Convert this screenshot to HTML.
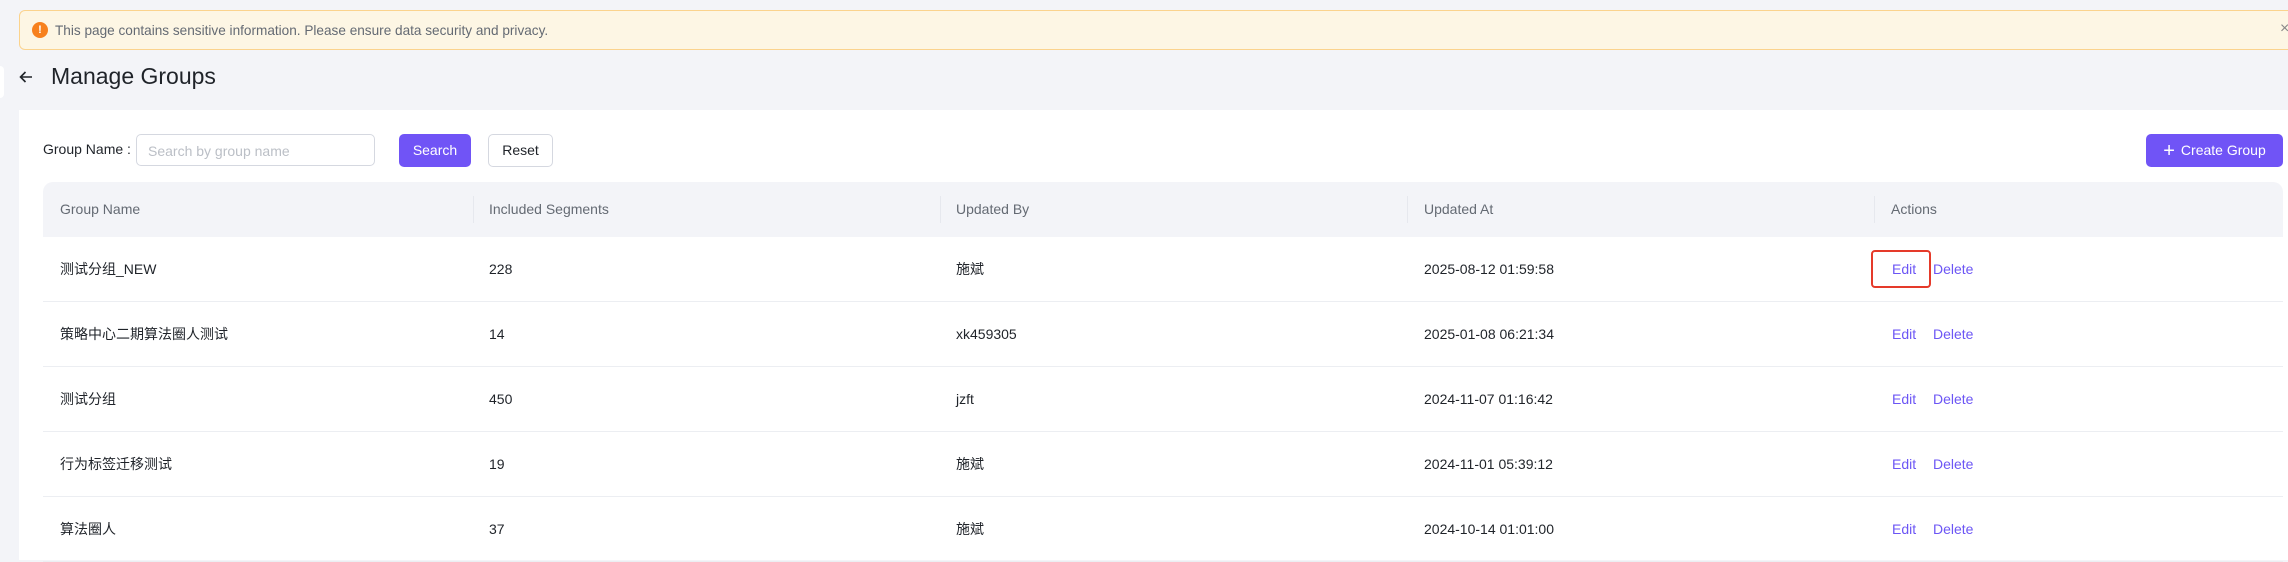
<!DOCTYPE html>
<html><head><meta charset="utf-8"><style>
*{box-sizing:border-box;margin:0;padding:0}
body{width:2288px;height:552px;background:#f3f4f8;font-family:"Liberation Sans","Noto Sans CJK SC",sans-serif;position:relative;overflow:hidden;color:#1f2329}
.abs{position:absolute}
.banner{left:19px;top:10px;width:2290px;height:40px;background:#fdf6e4;border:1px solid #fbd38d;border-radius:6px}
.banner .ic{left:12px;top:11px;width:16px;height:16px;border-radius:50%;background:#f7811e;color:#fff;font-size:11px;font-weight:bold;text-align:center;line-height:16px}
.banner .t{left:35px;top:12px;font-size:13.6px;color:#646a73}
.card{left:19px;top:110px;width:2280px;height:450px;background:#fff}
.row{position:absolute;left:43px;width:2240px;height:65px;border-bottom:1px solid #eceef2;font-size:14px}
.row span{position:absolute;top:23px;line-height:18px}
.hdr{position:absolute;left:43px;top:182px;width:2240px;height:55px;background:#f3f4f8;border-radius:10px 10px 0 0;font-size:14px;color:#646a73}
.hdr span{position:absolute;top:19px}
.hdr i{position:absolute;top:14px;width:1px;height:27px;background:#e6e8ee}
.lnk{color:#6c56f5}
.btn{position:absolute;height:33px;border-radius:5px;font-size:14px;text-align:center;line-height:31px}
</style></head><body>
<div class="abs" style="left:0;top:66px;width:4px;height:32px;background:#fff;border-radius:0 4px 4px 0"></div>
<div class="abs banner"><div class="abs ic">!</div><div class="abs t">This page contains sensitive information. Please ensure data security and privacy.</div></div>
<div class="abs" style="left:2280px;top:20px;font-size:16px;color:#888">×</div>
<svg class="abs" style="left:18px;top:69px" width="16" height="16" viewBox="0 0 16 16"><path d="M14 8H2.5M7.5 3L2.5 8l5 5" fill="none" stroke="#1f2329" stroke-width="1.6"/></svg>
<div class="abs" style="left:51px;top:63px;font-size:23px;font-weight:500;color:#1f2329">Manage Groups</div>
<div class="abs card"></div>
<div class="abs" style="left:43px;top:141px;font-size:14px">Group Name :</div>
<div class="abs" style="left:136px;top:134px;width:239px;height:32px;border:1px solid #d5d8e0;border-radius:5px;font-size:14px;color:#bbbfc6;padding:8px 11px">Search by group name</div>
<div class="btn" style="left:399px;top:134px;width:72px;background:#7054f6;color:#fff;border:1px solid #7054f6">Search</div>
<div class="btn" style="left:488px;top:134px;width:65px;background:#fff;border:1px solid #d5d8e0">Reset</div>
<div class="btn" style="left:2146px;top:134px;width:137px;background:#7054f6;color:#fff;border:1px solid #7054f6"><span style="font-size:20px;vertical-align:-2px;margin-right:6px">+</span>Create Group</div>
<div class="hdr"><span style="left:17px">Group Name</span><i style="left:430px"></i><span style="left:446px">Included Segments</span><i style="left:897px"></i><span style="left:913px">Updated By</span><i style="left:1364px"></i><span style="left:1381px">Updated At</span><i style="left:1831px"></i><span style="left:1848px">Actions</span></div>
<div class="row" style="top:237px"><span style="left:17px">测试分组_NEW</span><span style="left:446px">228</span><span style="left:913px">施斌</span><span style="left:1381px">2025-08-12 01:59:58</span><span class="lnk" style="left:1849px">Edit</span><span class="lnk" style="left:1890px">Delete</span></div>
<div class="row" style="top:302px"><span style="left:17px">策略中心二期算法圈人测试</span><span style="left:446px">14</span><span style="left:913px">xk459305</span><span style="left:1381px">2025-01-08 06:21:34</span><span class="lnk" style="left:1849px">Edit</span><span class="lnk" style="left:1890px">Delete</span></div>
<div class="row" style="top:367px"><span style="left:17px">测试分组</span><span style="left:446px">450</span><span style="left:913px">jzft</span><span style="left:1381px">2024-11-07 01:16:42</span><span class="lnk" style="left:1849px">Edit</span><span class="lnk" style="left:1890px">Delete</span></div>
<div class="row" style="top:432px"><span style="left:17px">行为标签迁移测试</span><span style="left:446px">19</span><span style="left:913px">施斌</span><span style="left:1381px">2024-11-01 05:39:12</span><span class="lnk" style="left:1849px">Edit</span><span class="lnk" style="left:1890px">Delete</span></div>
<div class="row" style="top:497px"><span style="left:17px">算法圈人</span><span style="left:446px">37</span><span style="left:913px">施斌</span><span style="left:1381px">2024-10-14 01:01:00</span><span class="lnk" style="left:1849px">Edit</span><span class="lnk" style="left:1890px">Delete</span></div>
<div class="abs" style="left:1871px;top:250px;width:60px;height:38px;border:2px solid #e53a2a;border-radius:4px"></div>
</body></html>
